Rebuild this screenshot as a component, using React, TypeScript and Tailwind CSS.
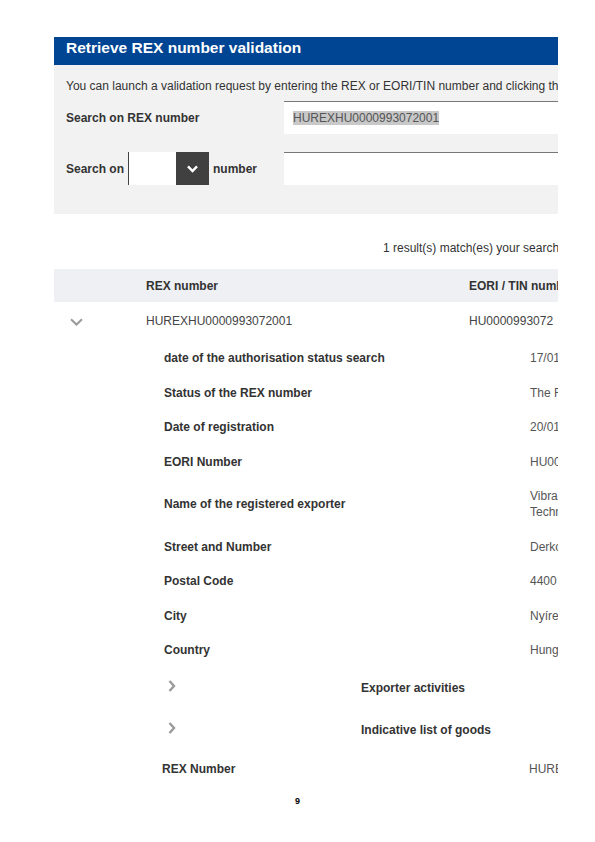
import React from 'react';

const details: { label: string; value: string[] }[] = [
  { label: 'date of the authorisation status search', value: ['17/01/2024'] },
  { label: 'Status of the REX number', value: ['The REX number is valid'] },
  { label: 'Date of registration', value: ['20/01/2017'] },
  { label: 'EORI Number', value: ['HU0000993072'] },
  { label: 'Name of the registered exporter', value: ['Vibracoustic CV Air Springs', 'Technical Rubber Products Kft.'] },
  { label: 'Street and Number', value: ['Derkovits utca 167.'] },
  { label: 'Postal Code', value: ['4400'] },
  { label: 'City', value: ['Nyíregyháza'] },
  { label: 'Country', value: ['Hungary'] },
];

function ChevronDown() {
  return (
    <svg width="13" height="8" viewBox="0 0 13 8" fill="none">
      <path d="M1 1.2l5.5 5.3 5.5-5.3" stroke="#9a9a9a" strokeWidth="2" />
    </svg>
  );
}

function ChevronRight() {
  return (
    <svg width="8" height="12" viewBox="0 0 8 12" fill="none">
      <path d="M1.5 1l4.5 5-4.5 5" stroke="#9a9a9a" strokeWidth="2.4" />
    </svg>
  );
}

export default function App() {
  return (
    <div className="w-[595px] min-h-[842px] bg-white font-['Liberation_Sans',Arial,sans-serif] text-[12px] text-[#333]">
      <div className="ml-[54px] pt-[37px] w-[504px] overflow-hidden">
        {/* Title bar */}
        <div className="h-[28px] bg-[#004494] pl-[12px] pt-[1px] text-[15.5px] leading-[20px] font-bold text-white whitespace-nowrap">
          Retrieve REX number validation
        </div>

        {/* Search panel */}
        <div className="bg-[#f2f2f2] pt-[13px] pb-[29px]">
          <div className="pl-[12px] leading-[16px] whitespace-nowrap">
            You can launch a validation request by entering the REX or EORI/TIN number and clicking the search button
          </div>
          <div className="mt-[7px] flex h-[33px] items-center">
            <div className="w-[230px] shrink-0 pl-[12px] font-bold whitespace-nowrap">Search on REX number</div>
            <div className="flex h-full flex-1 items-center border-t border-[#777] bg-white pl-[9px]">
              <span className="bg-[#c8c8c8] leading-[14px] text-[#555] whitespace-nowrap">HUREXHU0000993072001</span>
            </div>
          </div>
          <div className="mt-[18px] flex h-[33px] items-center">
            <div className="flex w-[230px] shrink-0 items-center pl-[12px] font-bold whitespace-nowrap">
              <span>Search on</span>
              <div className="ml-[4px] flex h-[33px] w-[81px]">
                <div className="w-[48px] border-l border-[#444] bg-white" />
                <div className="flex w-[33px] items-center justify-center bg-[#404040]">
                  <svg width="11" height="8" viewBox="0 0 11 8" fill="none">
                    <path d="M1 1.3l4.5 4.7 4.5-4.7" stroke="#fff" strokeWidth="2.4" />
                  </svg>
                </div>
              </div>
              <span className="ml-[4px]">number</span>
            </div>
            <div className="h-full flex-1 border-t border-[#777] bg-white" />
          </div>
        </div>

        {/* Results */}
        <div className="mt-[26px] pl-[329px] leading-[16px] whitespace-nowrap">1 result(s) match(es) your search criteria</div>

        <div className="mt-[13px] flex h-[33px] items-center bg-[#eef0f4] font-bold whitespace-nowrap">
          <div className="w-[92px] shrink-0" />
          <div className="w-[323px] shrink-0">REX number</div>
          <div className="shrink-0">EORI / TIN number</div>
        </div>

        <div className="flex h-[38px] items-center text-[#444] whitespace-nowrap">
          <div className="flex w-[92px] shrink-0 pl-[16px] pt-[1px]">
            <ChevronDown />
          </div>
          <div className="w-[323px] shrink-0">HUREXHU0000993072001</div>
          <div className="shrink-0">HU0000993072</div>
        </div>

        {/* Details */}
        <div className="pl-[110px] pt-[1px]">
          {details.map((d) => (
            <div key={d.label} className="flex items-center py-[9.25px] leading-[16px]">
              <div className="w-[366px] shrink-0 font-bold">{d.label}</div>
              <div className="shrink-0 whitespace-nowrap text-[#555]">
                {d.value.map((v) => (
                  <div key={v}>{v}</div>
                ))}
              </div>
            </div>
          ))}
        </div>

        <div className="mt-[5px] flex h-[26px] items-center pl-[114px] font-bold whitespace-nowrap">
          <div className="w-[193px] shrink-0">
            <ChevronRight />
          </div>
          <span className="pt-[4px]">Exporter activities</span>
        </div>
        <div className="mt-[16px] flex h-[26px] items-center pl-[114px] font-bold whitespace-nowrap">
          <div className="w-[193px] shrink-0">
            <ChevronRight />
          </div>
          <span className="pt-[4px]">Indicative list of goods</span>
        </div>

        <div className="mt-[15px] flex h-[26px] items-center pl-[108px] whitespace-nowrap">
          <div className="w-[367px] shrink-0 font-bold">REX Number</div>
          <div className="shrink-0 text-[#555]">HUREXHU0000993072001</div>
        </div>
      </div>

      <div className="mt-[14px] text-center text-[9px] font-bold leading-[10px] text-black">9</div>
    </div>
  );
}
